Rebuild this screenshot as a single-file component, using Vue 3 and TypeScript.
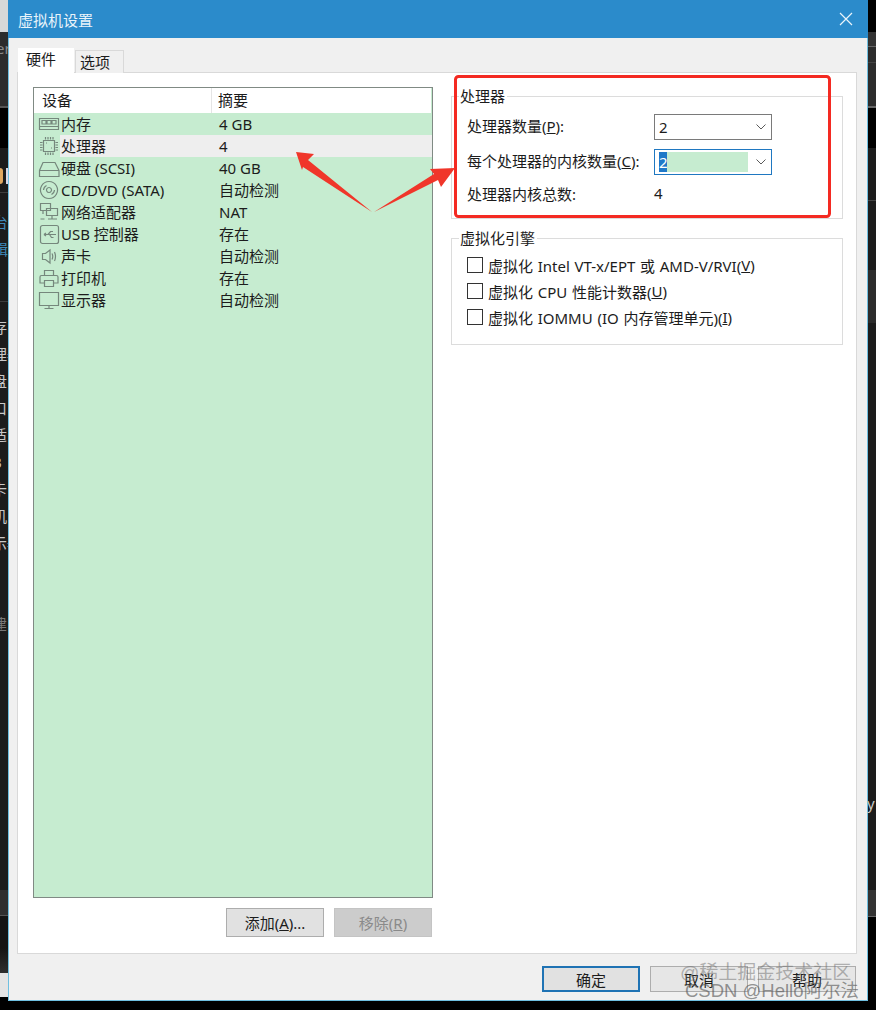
<script setup lang="ts">
interface Row {
  name: string
  value: string
  icon: string
  selected?: boolean
}

const rows: Row[] = [
  { name: '内存', value: '4 GB', icon: 'M1.5 5.500h19v11h-19zM1.500 13.500h19M4 7.500h4v3.500H4zM9 7.500h4v3.500H9zM14 7.500h4v3.500h-4z' },
  { name: '处理器', value: '4', selected: true, icon: 'M5.500 5.500h11v11h-11zM7.500 2v2.500M10 2v2.500M12.500 2v2.500M15 2v2.500M7.500 17.500V20M10 17.500V20M12.500 17.500V20M15 17.500V20M2 7.500h2.500M2 10h2.500M2 12.500h2.500M2 15h2.500M17.500 7.500H20M17.500 10H20M17.500 12.500H20M17.500 15H20M8 8h1M13 13h1' },
  { name: '硬盘 (SCSI)', value: '40 GB', icon: 'M5 5.500h12L21 13.500v6H1.500v-6zM1.500 13.500h19.500' },
  { name: 'CD/DVD (SATA)', value: '自动检测', icon: 'M11 2.500a8.500 8.500 0 1 0 .01 0zM11 8.500a2.500 2.500 0 1 0 .01 0zM5.500 11a5.500 5.500 0 0 1 3-4.500M16.500 11a5.500 5.500 0 0 1-3 4.500' },
  { name: '网络适配器', value: 'NAT', icon: 'M2.500 2.500h10v7h-10zM8.500 7.500h11v7h-11zM14 14.500v3M10 18h9M2.500 18h4M5 9.500v3.500' },
  { name: 'USB 控制器', value: '存在', icon: 'M4.500 2.500h14a2 2 0 0 1 2 2v14a2 2 0 0 1-2 2h-14a2 2 0 0 1-2-2v-14a2 2 0 0 1 2-2zM6 11.500h12M6 11.500l2-1.500M6 11.500l2 1.500M10 11.500l2.500-3h2.500M11.500 11.500l2 3h2' },
  { name: '声卡', value: '自动检测', icon: 'M4.500 8.500h3l4.500-3.500v13l-4.500-3.500h-3zM14 8.500q1.500 3 0 6M16.500 7q2 4.500 0 9' },
  { name: '打印机', value: '存在', icon: 'M6.500 3.500h9v5h-9zM3.500 8.500h15a1.500 1.500 0 0 1 1.500 1.500v6h-4M6 16H2v-6a1.500 1.500 0 0 1 1.500-1.500M6.500 13.500h9v6h-9z' },
  { name: '显示器', value: '自动检测', icon: 'M1.500 3.500h19v13h-19zM6.500 19.500h9M11 16.500v3' },
]

const leftScraps: string[] = ['存', '理器', '盘', '口', '适', 'B', '卡', '机', '示器']
</script>

<template>
  <div class="page">
    <div class="scrap left-top"></div>
    <div class="scrap left-band"><span class="scrap-er">er</span></div>
    <div class="scrap left-black"></div>
    <div class="scrap left-logo"><i></i><b></b></div>
    <div class="scrap left-rule rule-a"></div>
    <div class="scrap left-rule rule-b"></div>
    <div class="scrap left-blue"><span>台</span><span>辑</span></div>
    <div class="scrap left-list">
      <span v-for="s in leftScraps" :key="s">{{ s }}</span>
    </div>
    <div class="scrap left-new">建</div>
    <div class="scrap left-bottom"></div>
    <div class="scrap left-end"></div>
    <div class="scrap right-top"></div>
    <div class="scrap right-band"></div>
    <div class="scrap right-black"></div>
    <div class="scrap right-rule"></div>
    <div class="scrap right-mid"></div>
    <div class="scrap right-y">y</div>
    <div class="scrap right-bottom"></div>
    <div class="scrap right-end"></div>

    <div class="window">
      <header class="titlebar">
        <span class="title">虚拟机设置</span>
        <svg class="close" viewBox="0 0 14 14" width="14" height="14">
          <path d="M1 1l12 12M13 1L1 13" />
        </svg>
      </header>

      <div class="body">
        <div class="tabs">
          <div class="tab active">硬件</div>
          <div class="tab">选项</div>
        </div>

        <div class="panel">
          <div class="left-col">
            <div class="list">
              <div class="list-head">
                <div class="col-a">设备</div>
                <div class="col-b">摘要</div>
              </div>
              <div v-for="r in rows" :key="r.name" class="row">
                <svg class="icon" viewBox="0 0 22 22" width="22" height="22">
                  <path :d="r.icon" />
                </svg>
                <div class="row-inner" :class="{ selected: r.selected }">
                  <span class="row-name">{{ r.name }}</span>
                  <span class="row-value">{{ r.value }}</span>
                </div>
              </div>
            </div>
            <div class="list-actions">
              <button class="btn">添加(<u>A</u>)...</button>
              <button class="btn disabled">移除(<u>R</u>)</button>
            </div>
          </div>

          <div class="right-col">
            <fieldset class="group group-cpu">
              <legend>处理器</legend>
              <div class="form">
                <label>处理器数量(<u>P</u>):</label>
                <div class="combo">
                  <span class="combo-text">2</span>
                  <svg class="chevron" viewBox="0 0 10 6" width="10" height="6"><path d="M.5.500L5 5 9.500.500" /></svg>
                </div>
                <label>每个处理器的内核数量(<u>C</u>):</label>
                <div class="combo focused">
                  <span class="combo-sel">2</span>
                  <span class="combo-fill"></span>
                  <svg class="chevron" viewBox="0 0 10 6" width="10" height="6"><path d="M.5.500L5 5 9.500.500" /></svg>
                </div>
                <label class="last">处理器内核总数:</label>
                <div class="total last">4</div>
              </div>
            </fieldset>

            <fieldset class="group group-virt">
              <legend>虚拟化引擎</legend>
              <div class="check first"><span class="box"></span>虚拟化 Intel VT-x/EPT 或 AMD-V/RVI(<u>V</u>)</div>
              <div class="check"><span class="box"></span>虚拟化 CPU 性能计数器(<u>U</u>)</div>
              <div class="check"><span class="box"></span>虚拟化 IOMMU (IO 内存管理单元)(<u>I</u>)</div>
            </fieldset>
          </div>
        </div>

        <div class="footer">
          <button class="btn primary">确定</button>
          <button class="btn">取消</button>
          <button class="btn">帮助</button>
        </div>
      </div>
    </div>

    <svg class="annotations" viewBox="0 0 876 1010" width="876" height="1010">
      <rect x="455.500" y="76.500" width="374" height="140" rx="3" />
      <polygon points="296,152 314,154 308,160 372,212 303,167 302,170" />
      <polygon points="455,168 441,187 438,180 374,212 434,174 430,169" />
    </svg>

    <div class="wm wm-juejin">@稀土掘金技术社区</div>
    <div class="wm wm-csdn">CSDN @Hello阿尔法</div>
  </div>
</template>

<style>
html,
body {
  margin: 0;
  background: #000;
}
</style>

<style scoped>
.page {
  position: relative;
  width: 876px;
  height: 1010px;
  overflow: hidden;
  background: #000;
  padding-left: 8px;
  box-sizing: border-box;
  font-family: "Noto Sans", "Noto Sans CJK SC", sans-serif;
  font-size: 15px;
  color: #1c1c1c;
}

.scrap {
  position: absolute;
}
.left-top {
  left: 0;
  top: 0;
  width: 8px;
  height: 32px;
  background: #d8d8d8;
}
.left-band {
  left: 0;
  top: 32px;
  width: 8px;
  height: 76px;
  overflow: hidden;
  background: #2c2c2c;
  border-bottom: 2px solid #555;
  box-sizing: border-box;
}
.scrap-er {
  position: absolute;
  left: -4px;
  top: 6px;
  color: #8a8a8a;
  font-size: 15px;
  line-height: 20px;
}
.left-black {
  left: 0;
  top: 108px;
  width: 8px;
  height: 40px;
  background: #000;
}
.left-logo {
  left: 0;
  top: 148px;
  width: 8px;
  height: 742px;
  background: #1c1c1c;
}
.left-logo i {
  position: absolute;
  left: 0;
  top: 20px;
  width: 3px;
  height: 16px;
  border-radius: 0 3px 3px 0;
  background: #e0a860;
}
.left-logo b {
  position: absolute;
  left: 6px;
  top: 20px;
  width: 2px;
  height: 16px;
  background: #d8d8e8;
}
.left-rule {
  left: 0;
  width: 8px;
  height: 1px;
  background: #3e3e3e;
}
.rule-a {
  top: 192px;
}
.rule-b {
  top: 301px;
}
.left-blue {
  left: -7px;
  top: 212px;
  display: flex;
  flex-direction: column;
  gap: 7px;
  color: #3e88b8;
  font-size: 15px;
  line-height: 20px;
}
.left-list {
  left: -8px;
  top: 314px;
  width: 16px;
  display: flex;
  flex-direction: column;
  align-items: flex-start;
  color: #c8c8c8;
  font-size: 15px;
  line-height: 27px;
  white-space: nowrap;
}
.left-new {
  left: -8px;
  top: 614px;
  color: #777;
  font-size: 15px;
  line-height: 20px;
}
.left-bottom {
  left: 0;
  top: 890px;
  width: 8px;
  height: 83px;
  background: linear-gradient(#2f2f2f 0 25px, #555 25px 26px, #141414 26px 58px, #2e2e2e 100%);
}
.left-end {
  left: 0;
  top: 973px;
  width: 8px;
  height: 24px;
  background: #e4e4e4;
}
.right-top {
  left: 868px;
  top: 0;
  width: 8px;
  height: 32px;
  background: #000;
}
.right-band {
  left: 868px;
  top: 32px;
  width: 8px;
  height: 76px;
  background: linear-gradient(#333 0 14px, #666 14px 15px, #2c2c2c 15px 30px, #444 30px 31px, #2c2c2c 31px);
  border-bottom: 2px solid #666;
  box-sizing: border-box;
}
.right-black {
  left: 868px;
  top: 108px;
  width: 8px;
  height: 40px;
  background: #000;
}
.right-mid {
  left: 868px;
  top: 148px;
  width: 8px;
  height: 742px;
  background: linear-gradient(#1c1c1c 0 122px, #2c2c2c 122px 175px, #1c1c1c 175px);
}
.right-rule {
  left: 868px;
  top: 200px;
  width: 8px;
  height: 1px;
  z-index: 1;
  background: #444;
}
.right-y {
  left: 867px;
  top: 793px;
  z-index: 1;
  color: #c8c8c8;
  font-size: 15px;
  line-height: 20px;
}
.right-bottom {
  left: 868px;
  top: 890px;
  width: 8px;
  height: 26px;
  background: #333;
  border-bottom: 1px solid #666;
}
.right-end {
  left: 868px;
  top: 917px;
  width: 8px;
  height: 93px;
  background: #000;
}

.window {
  position: relative;
  width: 860px;
  height: 1001px;
  box-sizing: border-box;
  border: 1px solid #6fbfe0;
  border-top: 0;
  background: #f0f0f0;
  display: flex;
  flex-direction: column;
}

.titlebar {
  height: 38px;
  flex: none;
  margin: 0 -1px;
  background: #2b8bcb;
  color: #e8f3fa;
  display: flex;
  align-items: center;
  justify-content: space-between;
  padding: 0 15px 0 10px;
}
.title {
  font-size: 15px;
}
.close path {
  fill: none;
  stroke: #eaf4fb;
  stroke-width: 1.200;
}

.body {
  flex: 1;
  display: flex;
  flex-direction: column;
  padding: 10px 10px 0 8px;
}

.tabs {
  display: flex;
  align-items: flex-end;
  padding-left: 1px;
  height: 25px;
  position: relative;
  z-index: 1;
  margin-bottom: -1px;
}
.tab {
  box-sizing: border-box;
  width: 49px;
  height: 23px;
  line-height: 22px;
  padding-left: 4px;
  background: #f0f0f0;
  border: 1px solid #d9d9d9;
  border-bottom: 0;
  margin-left: 1px;
}
.tab.active {
  width: 56px;
  height: 25px;
  margin-left: 0;
  padding-left: 7px;
  line-height: 21px;
  background: #fff;
  border-color: #fff;
}

.panel {
  box-sizing: border-box;
  width: 840px;
  height: 882px;
  background: #fff;
  border: 1px solid #d9d9d9;
  display: flex;
  gap: 18px;
  padding: 14px 0 0 15px;
}

.left-col {
  width: 400px;
  flex: none;
  display: flex;
  flex-direction: column;
}

.list {
  box-sizing: border-box;
  height: 811px;
  border: 1px solid #808a84;
  background: #c6ecd0;
}
.list-head {
  height: 25px;
  background: #fff;
  display: flex;
  line-height: 25px;
  margin-right: 1px;
}
.col-a {
  box-sizing: border-box;
  width: 178px;
  padding-left: 8px;
  border-right: 1px solid #e5e5e5;
}
.col-b {
  padding-left: 6px;
}

.row {
  height: 22px;
  display: flex;
  align-items: center;
}
.icon {
  flex: none;
  margin-left: 4px;
  width: 22px;
}
.icon path {
  fill: none;
  stroke: #75877c;
  stroke-width: 1.200;
}
.row-inner {
  flex: 1;
  height: 22px;
  line-height: 22px;
  display: flex;
}
.row-inner.selected {
  background: #eeeeee;
}
.row-name {
  width: 158px;
  padding-left: 1px;
}

.list-actions {
  display: flex;
  justify-content: flex-end;
  gap: 10px;
  padding: 10px 1px 0 0;
}

.btn {
  box-sizing: border-box;
  width: 98px;
  height: 29px;
  padding: 0;
  background: #e1e1e1;
  border: 1px solid #adadad;
  border-radius: 0;
  font: inherit;
  color: #1c1c1c;
}
.btn.disabled {
  background: #cccccc;
  border-color: #c4c4c4;
  color: #8a8a8a;
}

.right-col {
  width: 392px;
  flex: none;
  display: flex;
  flex-direction: column;
  gap: 9px;
  margin-top: -1px;
}

.group {
  margin: 0;
  min-width: 0;
  box-sizing: border-box;
  border: 1px solid #dcdcdc;
  padding: 0 0 0 15px;
}
.group legend {
  margin-left: -8px;
  padding: 0 2px 0 1px;
  line-height: 20px;
}
.group-cpu {
  height: 133px;
}
.group-virt {
  height: 117px;
}

.form {
  display: grid;
  grid-template-columns: 187px 118px;
  grid-auto-rows: 26px;
  row-gap: 9px;
  align-items: center;
  padding-top: 8px;
  white-space: nowrap;
}
.form label {
  margin-top: -3px;
}
.form .last {
  margin-top: -8px;
}
.form u,
.check u {
  text-underline-offset: 1px;
}

.combo {
  position: relative;
  box-sizing: border-box;
  height: 26px;
  background: #fff;
  border: 1px solid #7a7a7a;
  display: flex;
  align-items: center;
  padding-left: 4px;
}
.combo.focused {
  border-color: #1f78c1;
}
.combo-sel {
  background: #1f78c8;
  color: #fff;
  width: 8px;
  height: 20px;
  line-height: 20px;
  flex: none;
}
.combo-fill {
  width: 81px;
  height: 20px;
  background: #c6ecd0;
  flex: none;
}
.chevron {
  position: absolute;
  right: 5px;
  top: 9px;
}
.chevron path {
  fill: none;
  stroke: #5a5a5a;
  stroke-width: 1;
}

.check {
  height: 26px;
  display: flex;
  align-items: center;
  white-space: pre-wrap;
  word-spacing: 0.800px;
}
.check.first {
  margin-top: 4px;
}
.box {
  box-sizing: border-box;
  flex: none;
  width: 16px;
  height: 16px;
  background: #fff;
  border: 1px solid #333;
  margin-right: 5px;
}

.footer {
  display: flex;
  justify-content: flex-end;
  gap: 10px;
  padding: 12px 0 0;
  margin-right: 1px;
}
.footer .btn {
  height: 26px;
}
.footer .btn:not(.primary) {
  background: #e6e6e6;
}
.footer .primary {
  border: 2px solid #1f73b4;
}

.annotations {
  position: absolute;
  left: 0;
  top: 0;
  pointer-events: none;
}
.annotations rect {
  fill: none;
  stroke: #f42a22;
  stroke-width: 3;
}
.annotations polygon {
  fill: #f0362a;
}

.wm {
  position: absolute;
  white-space: nowrap;
  pointer-events: none;
  font-family: "Liberation Sans", "Noto Sans CJK SC", sans-serif;
}
.wm-juejin {
  left: 680px;
  top: 960px;
  font-size: 19px;
  line-height: 26px;
  color: rgba(110, 110, 110, 0.5);
}
.wm-csdn {
  left: 685px;
  top: 978px;
  font-size: 18.500px;
  line-height: 26px;
  color: rgba(90, 90, 90, 0.65);
}
</style>
